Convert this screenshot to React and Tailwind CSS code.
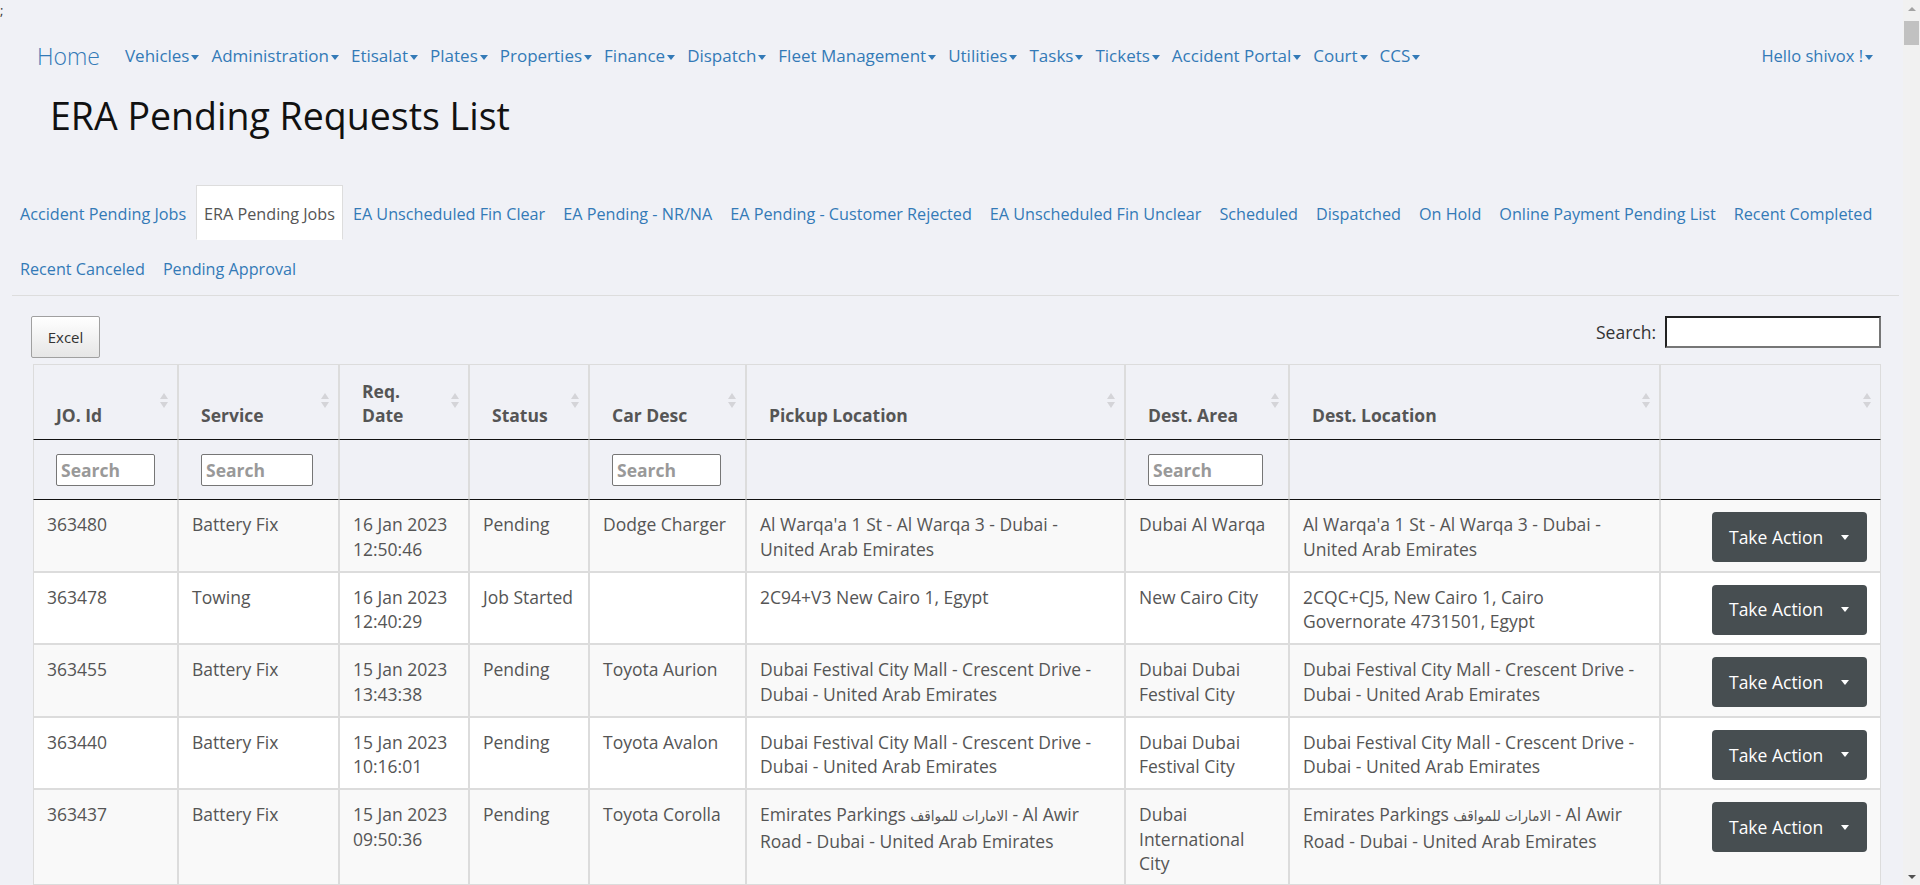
import React from 'react';

const navItems = [
  'Vehicles', 'Administration', 'Etisalat', 'Plates', 'Properties', 'Finance', 'Dispatch',
  'Fleet Management', 'Utilities', 'Tasks', 'Tickets', 'Accident Portal', 'Court', 'CCS',
];

const tabs = [
  'Accident Pending Jobs', 'ERA Pending Jobs', 'EA Unscheduled Fin Clear', 'EA Pending - NR/NA',
  'EA Pending - Customer Rejected', 'EA Unscheduled Fin Unclear', 'Scheduled', 'Dispatched',
  'On Hold', 'Online Payment Pending List', 'Recent Completed', 'Recent Canceled', 'Pending Approval',
];

const cols = [
  { title: 'JO. Id', w: 145, filter: true },
  { title: 'Service', w: 161, filter: true },
  { title: 'Req. Date', w: 130 },
  { title: 'Status', w: 120 },
  { title: 'Car Desc', w: 157, filter: true },
  { title: 'Pickup Location', w: 379 },
  { title: 'Dest. Area', w: 164, filter: true },
  { title: 'Dest. Location', w: 371 },
  { title: '', w: 221 },
];

const festival = 'Dubai Festival City Mall - Crescent Drive - Dubai - United Arab Emirates';
const warqa = "Al Warqa'a 1 St - Al Warqa 3 - Dubai - United Arab Emirates";
const awir = (
  <>
    Emirates Parkings{' '}
    <span className="font-['DejaVu_Sans_Condensed','DejaVu_Sans',sans-serif] text-[15px]">الامارات للمواقف</span>
    {' '}- Al Awir Road - Dubai - United Arab Emirates
  </>
);

const rows = [
  ['363480', 'Battery Fix', '16 Jan 2023 12:50:46', 'Pending', 'Dodge Charger', warqa, 'Dubai Al Warqa', warqa],
  ['363478', 'Towing', '16 Jan 2023 12:40:29', 'Job Started', '', '2C94+V3 New Cairo 1, Egypt', 'New Cairo City', '2CQC+CJ5, New Cairo 1, Cairo Governorate 4731501, Egypt'],
  ['363455', 'Battery Fix', '15 Jan 2023 13:43:38', 'Pending', 'Toyota Aurion', festival, 'Dubai Dubai Festival City', festival],
  ['363440', 'Battery Fix', '15 Jan 2023 10:16:01', 'Pending', 'Toyota Avalon', festival, 'Dubai Dubai Festival City', festival],
  ['363437', 'Battery Fix', '15 Jan 2023 09:50:36', 'Pending', 'Toyota Corolla', awir, 'Dubai International City', awir],
];

function Caret() {
  return (
    <span className="inline-block w-0 h-0 ml-[2px] align-middle border-x-[4.5px] border-x-transparent border-t-[5px] border-t-current" />
  );
}

function SortIcon() {
  return (
    <svg className="absolute right-[9px] top-[28px]" width="8" height="16" viewBox="0 0 8 16">
      <path d="M4 0 L8 6 H0 Z" fill="#d4d4d8" />
      <path d="M0 9 H8 L4 15 Z" fill="#d4d4d8" />
    </svg>
  );
}

// browser scrollbar as it shows in the capture
function ScrollBar() {
  return (
    <div className="fixed top-0 right-0 w-[17px] h-screen bg-[#f1f1f1] flex flex-col items-center">
      <div className="h-[17px] flex items-center justify-center">
        <span className="w-0 h-0 border-x-[4px] border-x-transparent border-b-[4px] border-b-[#a3a3a3]" />
      </div>
      <div className="mt-[4px] w-[15px] h-[24px] bg-[#c1c1c1]" />
      <div className="mt-auto h-[17px] flex items-center justify-center">
        <span className="w-0 h-0 border-x-[4px] border-x-transparent border-t-[4px] border-t-[#505050]" />
      </div>
    </div>
  );
}

export default function App() {
  return (
    <div className="w-[1903px] min-h-screen bg-[#f0f1f6] font-['Open_Sans',sans-serif] text-[#555]">
      <div className="h-[20px] text-[13px] leading-[20px] text-[#333]">;</div>

      <nav className="mt-[16px] h-[40px] flex items-center pl-[37px] pr-[30px] text-[#337ab7]">
        <a className="mr-[19px] text-[23px] font-light">Home</a>
        <ul className="flex items-center text-[17px]">
          {navItems.map((n) => (
            <li key={n} className="px-[6px] whitespace-nowrap">
              {n}
              <Caret />
            </li>
          ))}
        </ul>
        <div className="ml-auto text-[16.5px]">
          Hello shivox !
          <Caret />
        </div>
      </nav>

      <h2 className="mt-[18px] ml-[50px] text-[37.5px] leading-[44px] text-[#111]">ERA Pending Requests List</h2>

      <ul className="mt-[47px] ml-[12px] mr-[4px] flex flex-wrap border-b border-[#ddd] text-[16.2px]">
        {tabs.map((t) => (
          <li
            key={t}
            className={
              t === 'ERA Pending Jobs'
                ? 'h-[55px] mr-[2px] px-[7px] pt-[4px] flex items-center whitespace-nowrap bg-white border border-[#ddd] border-b-transparent text-[#555]'
                : 'h-[55px] mr-[2px] px-[7px] pt-[4px] flex items-center whitespace-nowrap border border-transparent text-[#337ab7]'
            }
          >
            {t}
          </li>
        ))}
      </ul>

      <div className="mt-[20px] pl-[31px] pr-[22px]">
        <div className="flex items-start justify-between">
          <button className="h-[42px] w-[69px] rounded-[2px] border border-[#a0a0a0] bg-linear-to-b from-white to-[#e6e6e6] text-[15px] text-[#333]">
            Excel
          </button>
          <label className="flex items-center text-[17.5px] text-[#333]">
            Search:
            <input className="ml-[9px] h-[32px] w-[216px] border-2 border-[#222] border-r-[#767676] border-b-[#767676] bg-white outline-none" />
          </label>
        </div>

        <table className="mt-[6px] ml-[2px] w-[1848px] table-fixed border-separate border-spacing-0 text-[17.5px]">
          <colgroup>
            {cols.map((c, i) => (
              <col key={i} style={{ width: c.w }} />
            ))}
          </colgroup>
          <thead>
            <tr>
              {cols.map((c, i) => (
                <th
                  key={i}
                  className="relative align-bottom text-left font-bold text-[#555] leading-[24px] pl-[22px] pr-[30px] pt-[14px] pb-[12px] border border-[#dcdcdc] border-b-[#111]"
                >
                  {c.title}
                  <SortIcon />
                </th>
              ))}
            </tr>
            <tr>
              {cols.map((c, i) => (
                <th
                  key={i}
                  className="h-[60px] align-middle text-left pl-[22px] border-x border-b border-[#dcdcdc] border-b-[#111]"
                >
                  {c.filter && (
                    <input
                      placeholder="Search"
                      className="block w-[82%] h-[32px] px-[4px] rounded-[2px] border border-[#767676] bg-white text-[17.5px] font-bold placeholder:text-[#999] outline-none"
                    />
                  )}
                </th>
              ))}
            </tr>
          </thead>
          <tbody>
            {rows.map((r, ri) => (
              <tr key={r[0]} className={ri % 2 === 0 ? 'bg-[#f9f9f9]' : 'bg-white'}>
                {r.map((v, ci) => (
                  <td
                    key={ci}
                    className="align-top px-[13px] pt-[12px] pb-[8.6px] leading-[24.5px] border-x border-b-2 border-[#dcdcdc]"
                  >
                    {v}
                  </td>
                ))}
                <td className="align-top pr-[13px] pt-[12px] pb-[8.6px] border-x border-b-2 border-[#dcdcdc]">
                  <div className="flex justify-end">
                    <button className="flex items-center h-[50px] w-[155px] pl-[17px] rounded-[4px] bg-[#474e51] text-[17.5px] text-white">
                      Take Action
                      <span className="ml-[18px] w-0 h-0 border-x-[4.5px] border-x-transparent border-t-[5px] border-t-white" />
                    </button>
                  </div>
                </td>
              </tr>
            ))}
          </tbody>
        </table>
        <div className="h-[400px]" />
      </div>
      <ScrollBar />
    </div>
  );
}
